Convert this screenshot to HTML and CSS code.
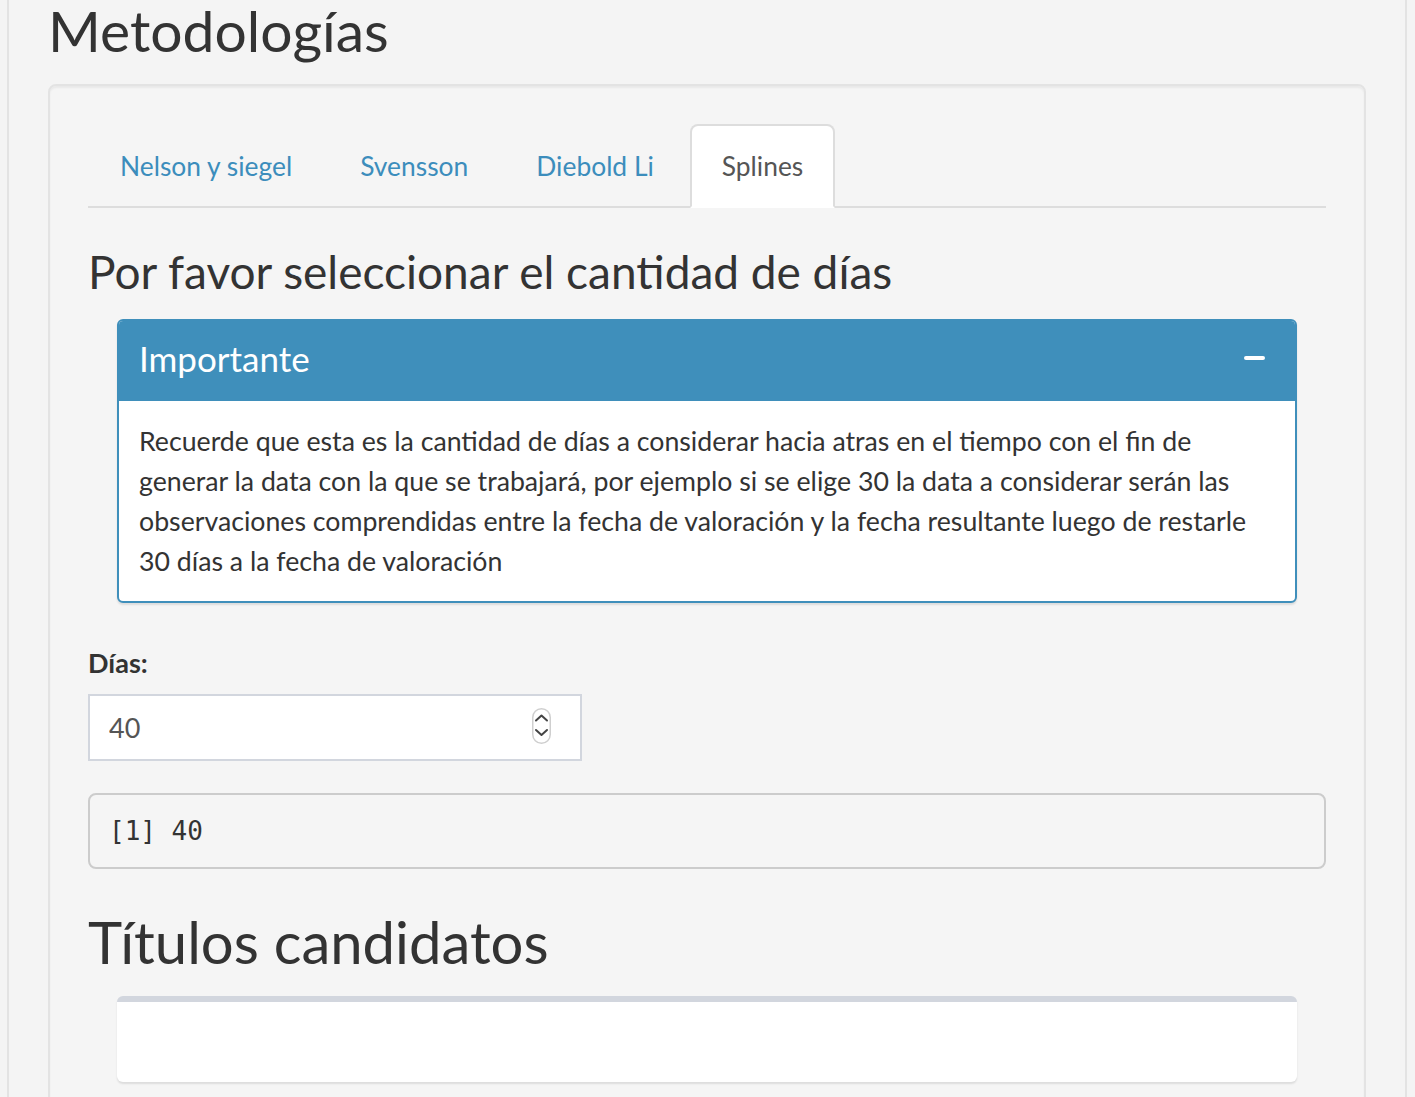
FILE: index.html
```html
<!DOCTYPE html>
<html lang="es">
<head>
<meta charset="utf-8">
<title>Metodologías</title>
<link rel="stylesheet" href="styles.css">
</head>
<body>
<div class="page">
  <h2 class="page-title">Metodologías</h2>
  <div class="well">
    <ul class="tabs">
      <li><a href="#">Nelson y siegel</a></li>
      <li><a href="#">Svensson</a></li>
      <li><a href="#">Diebold Li</a></li>
      <li class="active"><a href="#">Splines</a></li>
    </ul>
    <div class="tab-content">
      <h3 class="section-title">Por favor seleccionar el cantidad de días</h3>
      <div class="box box-primary">
        <div class="box-header">
          <h3 class="box-title">Importante</h3>
          <span class="box-tool"><span class="minus"></span></span>
        </div>
        <div class="box-body">Recuerde que esta es la cantidad de días a considerar hacia atras en el tiempo con el fin de generar la data con la que se trabajará, por ejemplo si se elige 30 la data a considerar serán las observaciones comprendidas entre la fecha de valoración y la fecha resultante luego de restarle 30 días a la fecha de valoración</div>
      </div>
      <div class="form-group">
        <label class="field-label" for="dias">Días:</label>
        <div class="input-wrap">
          <input id="dias" class="form-control" type="text" value="40" readonly>
          <svg class="spinner" width="19" height="36" viewBox="0 0 19 36">
            <rect x="0.75" y="0.75" width="17.5" height="34.5" rx="8.75" fill="#fff" stroke="#cfcfcf" stroke-width="1.5"/>
            <polyline points="4,12.5 9.5,7.5 15,12.5" fill="none" stroke="#444" stroke-width="2" stroke-linecap="round" stroke-linejoin="round"/>
            <polyline points="4,22 9.5,27 15,22" fill="none" stroke="#444" stroke-width="2" stroke-linecap="round" stroke-linejoin="round"/>
          </svg>
        </div>
      </div>
      <pre class="output">[1] 40</pre>
      <h2 class="section-title-lg">Títulos candidatos</h2>
      <div class="box box-default">
        <div class="box-body empty"></div>
      </div>
    </div>
  </div>
</div>
</body>
</html>
```
FILE: styles.css
```css
html, body {
  margin: 0;
  background: #f4f4f4;
}
body {
  font-family: Lato, "Noto Sans", sans-serif;
  color: #333;
  overflow: hidden;
}
.page {
  margin-left: 7px;
  width: 1400px;
  box-sizing: border-box;
  border-left: 2px solid #e3e3e3;
  border-right: 2px solid #e3e3e3;
  padding: 0 39px;
  min-height: 1200px;
}
.page-title {
  margin: 0 0 24px;
  font-size: 57px;
  line-height: 60px;
  font-weight: 400;
}
.well {
  background: #f5f5f5;
  border: 2px solid #e3e3e3;
  border-radius: 8px;
  box-shadow: inset 0 2px 2px rgba(0, 0, 0, 0.05);
  padding: 38px 38px 80px;
}
.tabs {
  list-style: none;
  margin: 0;
  padding: 0;
  display: flex;
  border-bottom: 2px solid #ddd;
}
.tabs li {
  margin: 0 4px -2px 0;
}
.tabs a {
  display: block;
  padding: 20px 30px;
  line-height: 40px;
  font-size: 26.4px;
  color: #3c8dbc;
  text-decoration: none;
  border: 2px solid transparent;
  border-radius: 8px 8px 0 0;
}
.tabs .active a {
  color: #555;
  background: #fff;
  border-color: #ddd;
  border-bottom-color: transparent;
}
.section-title {
  font-size: 46px;
  line-height: 53px;
  font-weight: 400;
  margin: 37px 0 21px;
}
.box {
  margin: 0 29px 40px;
  background: #fff;
  border-radius: 6px;
  box-shadow: 0 2px 2px rgba(0, 0, 0, 0.1);
}
.box-primary {
  border: 2px solid #3f8fbb;
}
.box-header {
  background: #3f8fbb;
  color: #fff;
  padding: 17px 30px 23px 20px;
  display: flex;
  justify-content: space-between;
  align-items: center;
  border-radius: 4px 4px 0 0;
}
.box-title {
  margin: 0;
  font-size: 35px;
  line-height: 40px;
  font-weight: 400;
}
.box-tool {
  display: flex;
  align-items: center;
}
.minus {
  display: block;
  width: 21px;
  height: 4px;
  background: #fff;
  border-radius: 2px;
}
.box-body {
  padding: 20px;
  font-size: 26.7px;
  line-height: 40px;
  color: #333;
}
.box-default {
  border-top: 6px solid #d2d6de;
}
.box-body.empty {
  height: 40px;
}
.form-group {
  margin-bottom: 32px;
}
.field-label {
  display: block;
  font-weight: 700;
  font-size: 27px;
  line-height: 40px;
  margin-bottom: 11px;
}
.input-wrap {
  position: relative;
  width: 494px;
}
.form-control {
  display: block;
  box-sizing: border-box;
  width: 100%;
  height: 67px;
  margin: 0;
  border: 2px solid #d2d6de;
  border-radius: 0;
  padding: 0 19px;
  font-family: Lato, "Noto Sans", sans-serif;
  font-size: 27px;
  color: #555;
  background: #fff;
  outline: none;
}
.spinner {
  position: absolute;
  right: 31px;
  top: 14px;
}
.output {
  margin: 0 0 20px;
  padding: 18px 19px;
  border: 2px solid #ccc;
  border-radius: 8px;
  background: #f5f5f5;
  font-family: "DejaVu Sans Mono", "Liberation Mono", monospace;
  font-size: 26px;
  line-height: 36px;
  color: #333;
}
.section-title-lg {
  font-size: 58px;
  line-height: 66px;
  font-weight: 400;
  margin: 40px 0 21px;
}
```
